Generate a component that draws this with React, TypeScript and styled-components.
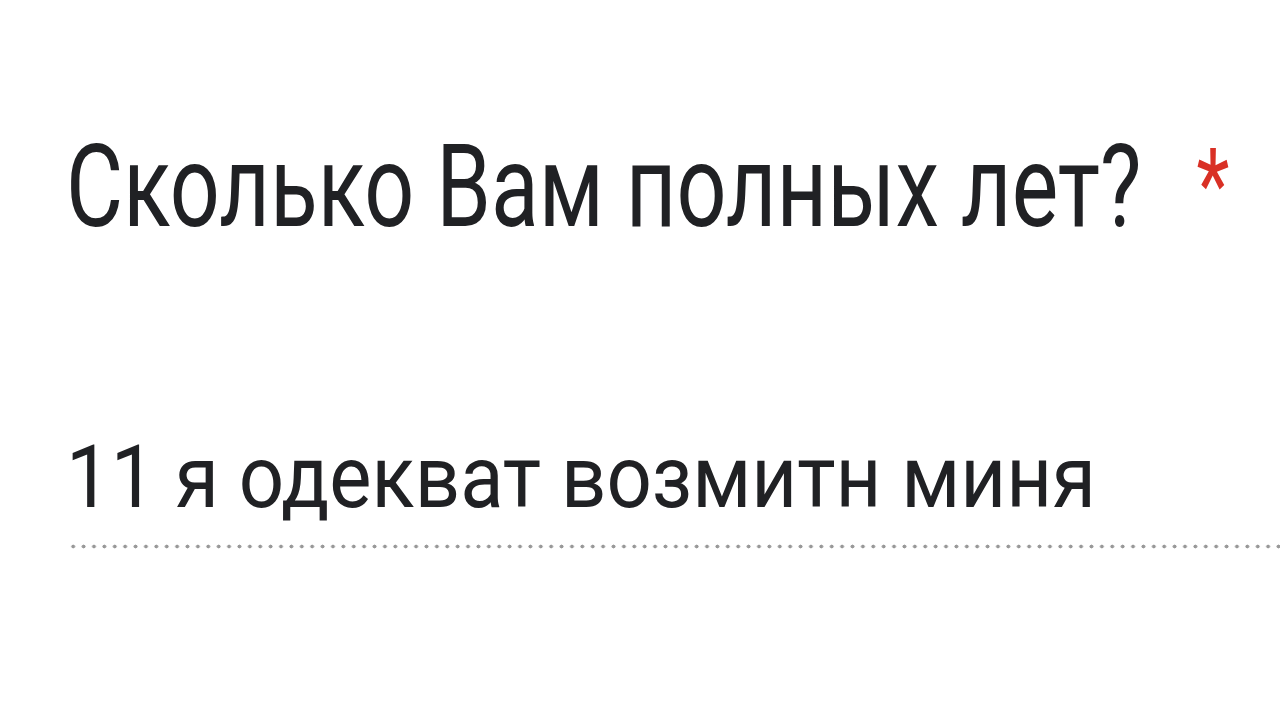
import React from "react";
import styled, { createGlobalStyle } from "styled-components";

const GlobalStyle = createGlobalStyle`
	html, body {
		margin: 0;
		padding: 0;
		background: #ffffff;
	}
	body {
		font-family: Roboto, "Noto Sans", Arial, sans-serif;
		color: #202124;
	}
`;

const Page = styled.div`
	width: 1280px;
	height: 720px;
	overflow: hidden;
	padding: 122px 0 0 66px;
	box-sizing: border-box;
`;

const TitleRow = styled.div`
	display: flex;
	align-items: flex-start;
	white-space: nowrap;
	transform-origin: left top;
	transform: scaleX(0.764);
`;

const Title = styled.span`
	font-size: 115px;
	line-height: 130px;
	font-weight: 400;
	color: #202124;
`;

const Required = styled.span`
	font-size: 100px;
	line-height: 130px;
	color: #d93025;
	padding-left: 72px;
	margin-top: -2px;
`;

const Answer = styled.div`
	margin-top: 170px;
`;

const AnswerText = styled.div`
	font-size: 87.5px;
	line-height: 110px;
	white-space: nowrap;
	color: #202124;
	transform-origin: left top;
	transform: scaleX(0.91);
`;

const DottedLine = styled.div`
	height: 5px;
	margin-top: 12px;
	margin-left: 2px;
	background-image: radial-gradient(circle, #989898 1.7px, transparent 2.2px);
	background-size: 10.4px 5px;
	background-repeat: repeat-x;
`;

export default function App() {
	return (
		<>
			<GlobalStyle />
			<Page>
				<TitleRow>
					<Title>Сколько Вам полных лет?</Title>
					<Required>*</Required>
				</TitleRow>
				<Answer>
					<AnswerText>11 я одекват возмитн миня</AnswerText>
					<DottedLine />
				</Answer>
			</Page>
		</>
	);
}
